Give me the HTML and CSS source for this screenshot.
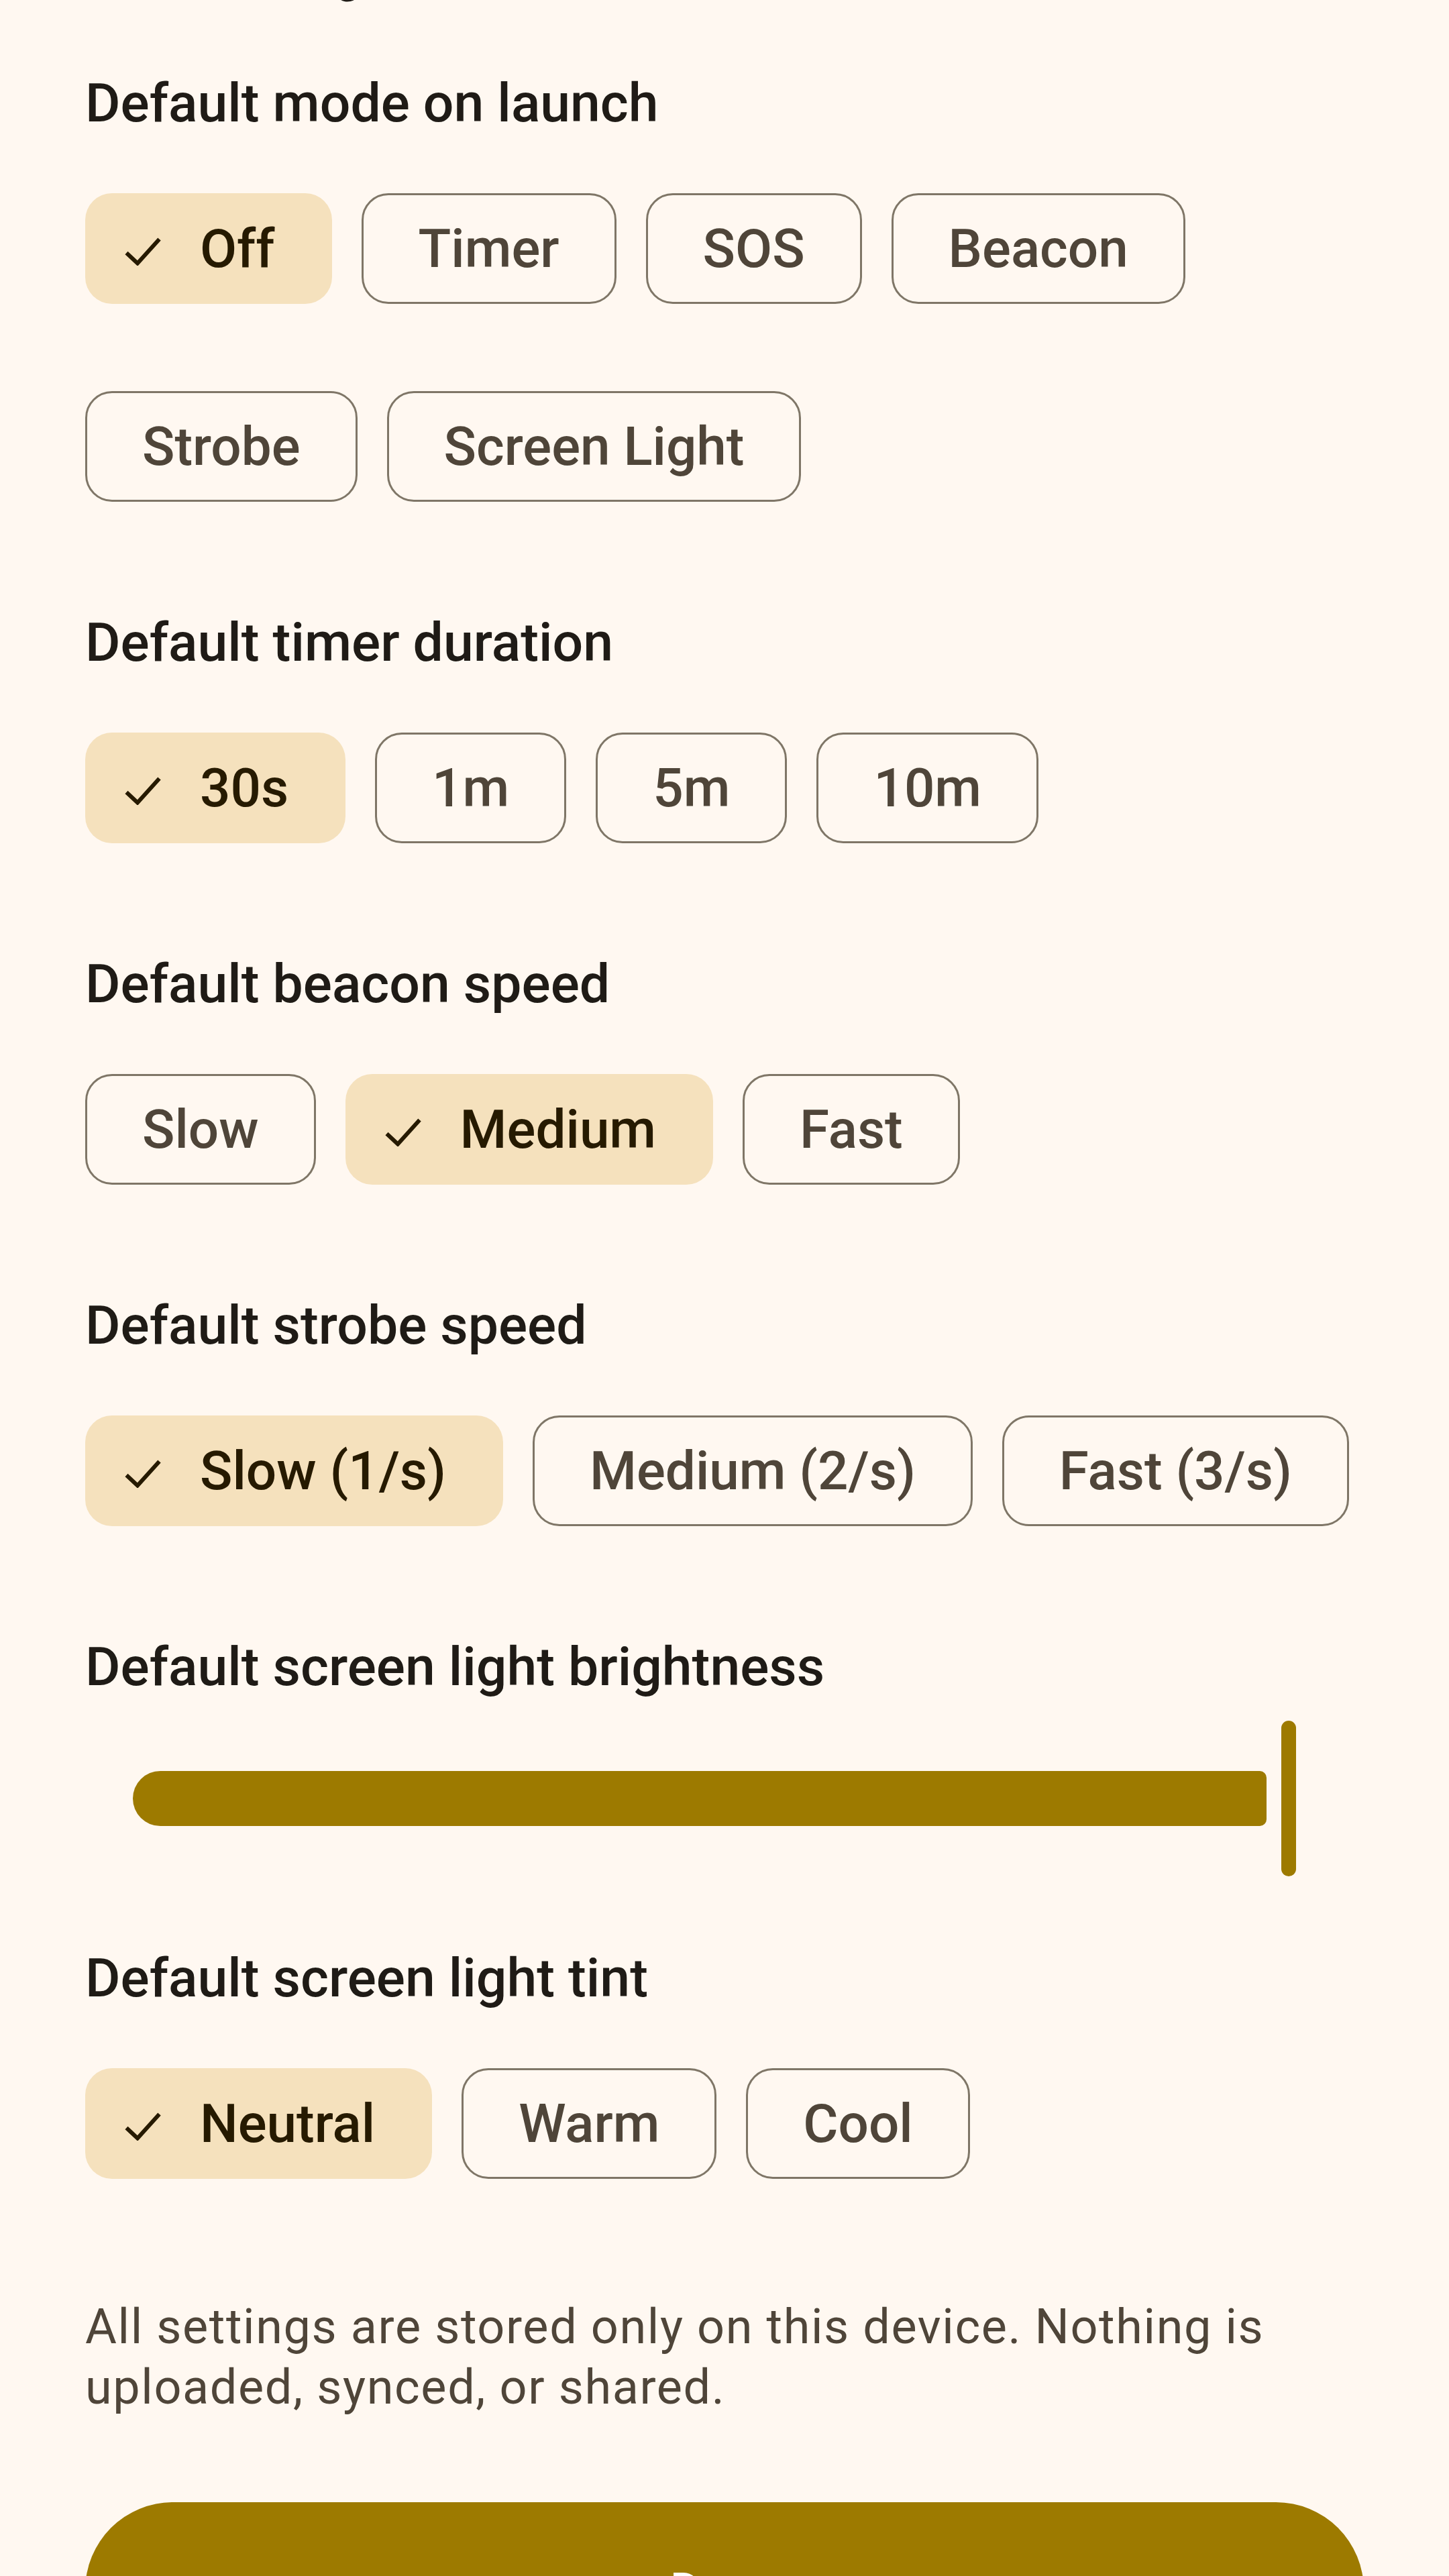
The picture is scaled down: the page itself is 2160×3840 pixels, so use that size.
FILE: index.html
```html
<!DOCTYPE html>
<html lang="en">
<head>
<meta charset="utf-8">
<title>Defaults</title>
<link rel="stylesheet" href="styles.css">
</head>
<body>
<main class="screen">
  <h2 class="top-title">Mode settings</h2>

  <section class="group">
    <h3 class="group-label">Default mode on launch</h3>
    <div class="chips">
      <div class="chip selected"><svg class="check" viewBox="0 0 56 44" width="56" height="44"><polyline points="3.5,25 20,40.5 52.5,4.5"/></svg><span>Off</span></div>
      <div class="chip">Timer</div>
      <div class="chip">SOS</div>
      <div class="chip">Beacon</div>
      <div class="chip">Strobe</div>
      <div class="chip">Screen Light</div>
    </div>
  </section>

  <section class="group">
    <h3 class="group-label">Default timer duration</h3>
    <div class="chips">
      <div class="chip selected"><svg class="check" viewBox="0 0 56 44" width="56" height="44"><polyline points="3.5,25 20,40.5 52.5,4.5"/></svg><span>30s</span></div>
      <div class="chip">1m</div>
      <div class="chip">5m</div>
      <div class="chip">10m</div>
    </div>
  </section>

  <section class="group">
    <h3 class="group-label">Default beacon speed</h3>
    <div class="chips">
      <div class="chip">Slow</div>
      <div class="chip selected"><svg class="check" viewBox="0 0 56 44" width="56" height="44"><polyline points="3.5,25 20,40.5 52.5,4.5"/></svg><span>Medium</span></div>
      <div class="chip">Fast</div>
    </div>
  </section>

  <section class="group">
    <h3 class="group-label">Default strobe speed</h3>
    <div class="chips">
      <div class="chip selected"><svg class="check" viewBox="0 0 56 44" width="56" height="44"><polyline points="3.5,25 20,40.5 52.5,4.5"/></svg><span>Slow (1/s)</span></div>
      <div class="chip">Medium (2/s)</div>
      <div class="chip">Fast (3/s)</div>
    </div>
  </section>

  <section class="group">
    <h3 class="group-label">Default screen light brightness</h3>
    <div class="slider">
      <div class="track"></div>
      <div class="thumb"></div>
    </div>
  </section>

  <section class="group after-slider">
    <h3 class="group-label">Default screen light tint</h3>
    <div class="chips">
      <div class="chip selected"><svg class="check" viewBox="0 0 56 44" width="56" height="44"><polyline points="3.5,25 20,40.5 52.5,4.5"/></svg><span>Neutral</span></div>
      <div class="chip">Warm</div>
      <div class="chip">Cool</div>
    </div>
  </section>

  <p class="note">All settings are stored only on this device. Nothing is uploaded, synced, or shared.</p>

  <button class="done" type="button">Done</button>
</main>
</body>
</html>
```

FILE: styles.css
```css
html, body {
  margin: 0;
  padding: 0;
  background: #FFF8F1;
}

body {
  font-family: Roboto, "Noto Sans", "Liberation Sans", sans-serif;
  color: #1F1B16;
  overflow: hidden;
  height: 3840px;
}

.screen {
  display: flex;
  flex-direction: column;
  padding: 0 127px;
}

.top-title {
  margin: -78px 0 0 0;
  font-size: 70px;
  line-height: 84px;
  font-weight: 500;
  color: #1F1B16;
}

.group {
  display: flex;
  flex-direction: column;
  margin-top: 150px;
}

.group:first-of-type {
  margin-top: 88px;
}

.group.after-slider {
  margin-top: 92px;
}

.group-label {
  margin: 0;
  font-size: 80.5px;
  line-height: 120px;
  font-weight: 500;
  color: #1F1B16;
}

.chips {
  display: flex;
  flex-wrap: wrap;
  column-gap: 44px;
  row-gap: 130px;
  margin-top: 74px;
}

.chip {
  box-sizing: border-box;
  height: 165px;
  display: flex;
  align-items: center;
  padding: 0 82px;
  border: 3px solid #7F7667;
  border-radius: 40px;
  font-size: 80px;
  line-height: 120px;
  font-weight: 500;
  color: #4F4539;
  white-space: nowrap;
}

.chip.selected {
  border-color: transparent;
  background: #F5E1BD;
  color: #261A00;
  padding-left: 55px;
}

.check {
  display: block;
  margin-right: 57px;
  margin-top: 6px;
  flex: none;
}

.check polyline {
  fill: none;
  stroke: #261A00;
  stroke-width: 6;
  stroke-linejoin: miter;
}

.slider {
  display: flex;
  align-items: center;
  height: 232px;
  margin-top: 20px;
  padding-left: 71px;
  gap: 22px;
}

.track {
  width: 1690px;
  height: 82px;
  background: #9D7A00;
  border-radius: 41px 10px 10px 41px;
}

.thumb {
  width: 22px;
  height: 232px;
  background: #9D7A00;
  border-radius: 11px;
}

.note {
  margin: 176px 0 0 0;
  font-size: 72px;
  line-height: 90px;
  font-weight: 400;
  letter-spacing: 1.6px;
  color: #4F4539;
}

.done {
  margin-top: 126px;
  height: 262px;
  width: 100%;
  border: none;
  border-radius: 131px;
  background: #9D7A00;
  color: #FFFFFF;
  font-family: Roboto, "Noto Sans", "Liberation Sans", sans-serif;
  font-size: 70px;
  font-weight: 500;
  padding: 0;
}
```
